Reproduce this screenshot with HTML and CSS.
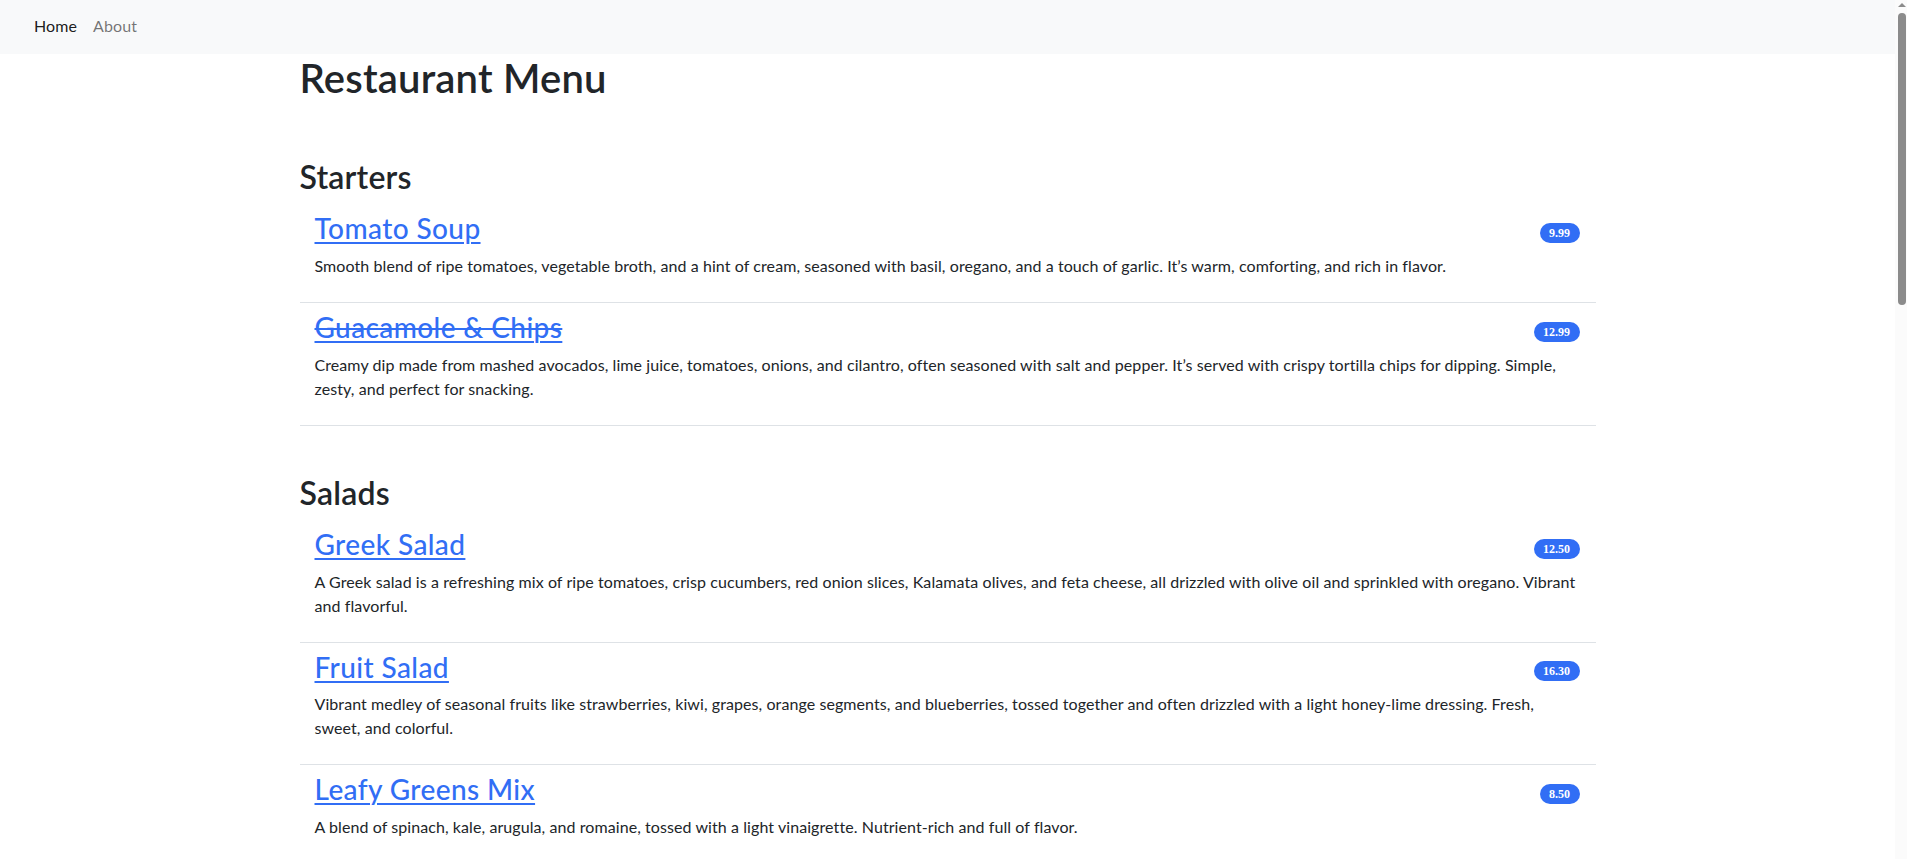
FILE: index.html
```html
<!DOCTYPE html>
<html lang="en">
<head>
<meta charset="utf-8">
<title>Restaurant Menu</title>
<link rel="stylesheet" href="styles.css">
</head>
<body>
<div class="viewport">
  <nav class="navbar">
    <ul class="nav">
      <li><a class="nav-link active" href="#">Home</a></li>
      <li><a class="nav-link" href="#">About</a></li>
    </ul>
  </nav>
  <main class="container">
    <h1 class="page-title">Restaurant Menu</h1>

    <section class="menu-section">
      <h2 class="section-title">Starters</h2>
      <ul class="item-list">
        <li class="item">
          <div class="item-head">
            <h3 class="item-title"><a href="#">Tomato Soup</a></h3>
            <span class="badge">9.99</span>
          </div>
          <p class="item-desc">Smooth blend of ripe tomatoes, vegetable broth, and a hint of cream, seasoned with basil, oregano, and a touch of garlic. It’s warm, comforting, and rich in flavor.</p>
        </li>
        <li class="item">
          <div class="item-head">
            <h3 class="item-title"><a href="#" class="unavailable">Guacamole &amp; Chips</a></h3>
            <span class="badge">12.99</span>
          </div>
          <p class="item-desc">Creamy dip made from mashed avocados, lime juice, tomatoes, onions, and cilantro, often seasoned with salt and pepper. It’s served with crispy tortilla chips for dipping. Simple, zesty, and perfect for snacking.</p>
        </li>
      </ul>
    </section>

    <section class="menu-section">
      <h2 class="section-title">Salads</h2>
      <ul class="item-list">
        <li class="item">
          <div class="item-head">
            <h3 class="item-title"><a href="#">Greek Salad</a></h3>
            <span class="badge">12.50</span>
          </div>
          <p class="item-desc">A Greek salad is a refreshing mix of ripe tomatoes, crisp cucumbers, red onion slices, Kalamata olives, and feta cheese, all drizzled with olive oil and sprinkled with oregano. Vibrant and flavorful.</p>
        </li>
        <li class="item">
          <div class="item-head">
            <h3 class="item-title"><a href="#">Fruit Salad</a></h3>
            <span class="badge">16.30</span>
          </div>
          <p class="item-desc">Vibrant medley of seasonal fruits like strawberries, kiwi, grapes, orange segments, and blueberries, tossed together and often drizzled with a light honey-lime dressing. Fresh, sweet, and colorful.</p>
        </li>
        <li class="item">
          <div class="item-head">
            <h3 class="item-title"><a href="#">Leafy Greens Mix</a></h3>
            <span class="badge">8.50</span>
          </div>
          <p class="item-desc">A blend of spinach, kale, arugula, and romaine, tossed with a light vinaigrette. Nutrient-rich and full of flavor.</p>
        </li>
      </ul>
    </section>
  </main>
</div>
<div class="scrollbar" aria-hidden="true">
  <div class="scroll-arrow"></div>
  <div class="scroll-thumb"></div>
</div>
</body>
</html>
```
FILE: styles.css
```css
*, *::before, *::after {
  box-sizing: border-box;
}
html, body {
  height: 100%;
}
body {
  margin: 0;
  display: flex;
  overflow: hidden;
  font-family: "Lato", "Liberation Sans", sans-serif;
  font-size: 16px;
  line-height: 1.5;
  letter-spacing: 0.08px;
  color: #212529;
  background: #fff;
}

.viewport {
  flex: 1;
  min-width: 0;
  overflow: hidden;
}

.scrollbar {
  width: 12px;
  flex: none;
  background: #fbfbfb;
  display: flex;
  flex-direction: column;
  padding-left: 3px;
}
.scroll-arrow {
  width: 0;
  height: 0;
  margin: 3px 0 6px;
  border-left: 4px solid transparent;
  border-right: 4px solid transparent;
  border-bottom: 4px solid #8b8b8b;
}
.scroll-thumb {
  width: 8px;
  height: 292px;
  border-radius: 4px;
  background: #8b8b8b;
}

.navbar {
  height: 54px;
  background: #f8f9fa;
  display: flex;
  align-items: center;
  padding-left: 26px;
}
.nav {
  list-style: none;
  margin: 0;
  padding: 0;
  display: flex;
}
.nav-link {
  display: block;
  padding: 7px 8px 9px;
  text-decoration: none;
  letter-spacing: 0.1px;
  color: rgba(0, 0, 0, 0.55);
}
.nav-link.active {
  color: rgba(0, 0, 0, 0.9);
}

.container {
  max-width: 1320px;
  margin: 0 auto;
  padding: 0 12px;
  display: flex;
  flex-direction: column;
}

.page-title {
  margin: 0 0 8px;
  font-size: 40px;
  line-height: 1.2;
  font-weight: 600;
  letter-spacing: 0.2px;
}

.menu-section {
  margin-top: 48px;
}
.section-title {
  margin: 0 0 8px;
  font-size: 32px;
  line-height: 1.2;
  font-weight: 600;
  letter-spacing: 0.2px;
}

.item-list {
  list-style: none;
  margin: 0;
  padding: 0;
}
.item {
  padding: 8px 16px 8px 15px;
  border-bottom: 1px solid #dee2e6;
}
.item-head {
  display: flex;
  justify-content: space-between;
  align-items: center;
}
.item-title {
  margin: 0 0 8px;
  font-size: 28px;
  line-height: 1.2;
  font-weight: 500;
  letter-spacing: 0.4px;
}
.item-title a {
  color: #316ef5;
  text-decoration: underline;
  text-underline-offset: 3px;
  text-decoration-thickness: 2px;
}
.item-title a.unavailable {
  text-decoration-line: underline line-through;
}
.item-desc {
  margin: 0 0 16px;
}

.badge {
  display: inline-block;
  padding: 4px 9.5px;
  font-family: "Liberation Serif", serif;
  font-size: 12px;
  font-weight: 700;
  line-height: 1;
  letter-spacing: 0;
  color: #fff;
  background: #316ef5;
  border-radius: 10px;
  white-space: nowrap;
}
```
